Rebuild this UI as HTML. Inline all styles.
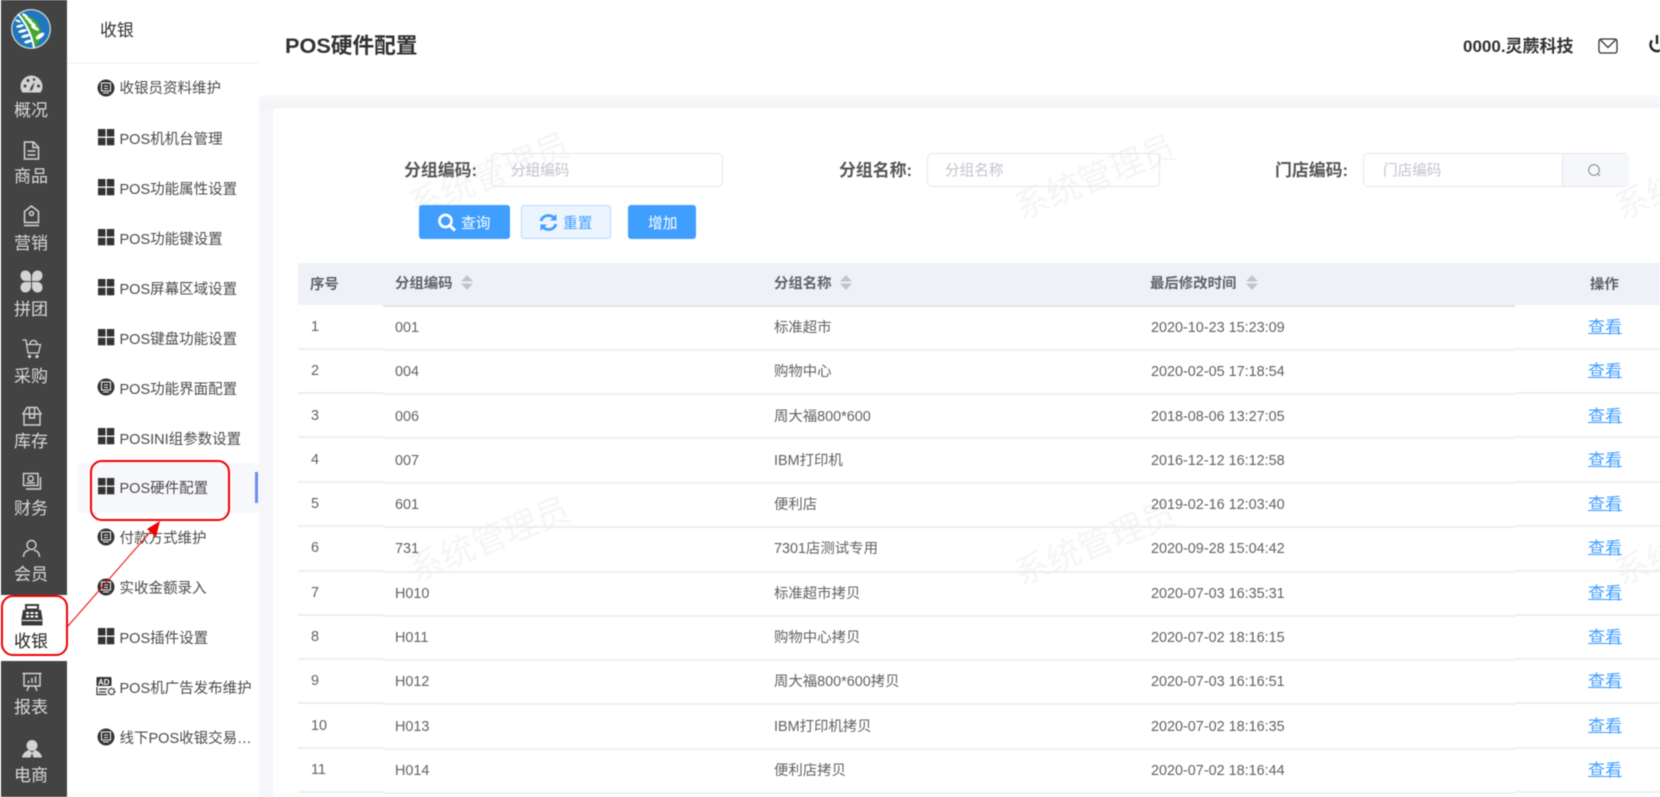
<!DOCTYPE html>
<html lang="zh-CN">
<head>
<meta charset="utf-8">
<title>POS硬件配置</title>
<style>
html,body{margin:0;padding:0;width:1660px;height:797px;overflow:hidden;background:#fff}
#w{position:relative;width:1660px;height:797px;overflow:hidden;background:#fff;font-family:"Liberation Sans","Noto Sans CJK SC",sans-serif;color:#606266;filter:blur(.4px)}
#w div,#w svg{position:absolute}
.t{white-space:nowrap;line-height:20px;height:20px;margin-top:1px}
.rail{left:1px;top:0;width:66px;height:595px;background:#434343}
.rail2{left:1px;top:661px;width:66px;height:136px;background:#434343}
.rl{left:0;width:62px;text-align:center;font-size:17px;color:#d9d9d9;white-space:nowrap;line-height:22px;height:22px;margin-top:1px}
.m{left:119.500px;font-size:14.5px;color:#4a4a4a}
.lb{font-size:16.9px;font-weight:bold;color:#555;margin-top:2px}
.inp{border:1px solid #e4e7ed;border-radius:5px;box-sizing:border-box;height:34px;top:153px}
.ph{top:159px;font-size:14.6px;color:#c0c4cc;margin-top:2px}
.bt{margin-top:2px}
.btn{top:205px;height:34px;border-radius:3px;background:#409eff;box-sizing:border-box}
.th{top:273px;font-size:14.4px;font-weight:bold;color:#606266}
.line{height:2px;background:#ebeef2}
.r{left:0;width:1660px;height:20px;margin-top:1px}
.r div{white-space:nowrap;line-height:20px;height:20px;top:0;font-size:14.4px;color:#606266}
.r div:nth-child(1){left:311px;top:-1px}
.r div:nth-child(2){left:395px}
.r div:nth-child(3){left:774px}
.r div:nth-child(4){left:1151px}
.r div:nth-child(5){left:1588px;font-size:17px;color:#409eff;text-decoration:underline;text-underline-offset:0;text-decoration-thickness:1px}
.wm{font-size:34px;color:#f5f5f6;white-space:nowrap;transform:rotate(-22deg);width:175px;height:40px;line-height:40px;text-align:center}
</style>
</head>
<body>
<div id="w">

<!-- content background -->
<div style="left:259px;top:95px;width:1401px;height:702px;background:#f5f6fa"></div>
<div style="left:259px;top:95px;width:1401px;height:13px;background:linear-gradient(#fafafb,#f2f3f5)"></div>
<div style="left:273px;top:108px;width:1387px;height:689px;background:#fff;border-radius:5px 0 0 0"></div>

<!-- watermarks -->
<div class="wm" style="left:402px;top:156px">系统管理员</div>
<div class="wm" style="left:1008px;top:158px">系统管理员</div>
<div class="wm" style="left:1608px;top:158px">系统管理员</div>
<div class="wm" style="left:402px;top:520px">系统管理员</div>
<div class="wm" style="left:1008px;top:524px">系统管理员</div>
<div class="wm" style="left:1608px;top:524px">系统管理员</div>

<!-- left rail -->
<div class="rail"></div>
<div class="rail2"></div>

<!-- logo -->
<svg style="left:10px;top:8px" width="42" height="42" viewBox="0 0 42 42">
<circle cx="21" cy="21" r="20" fill="#cfd5d0"/>
<circle cx="21" cy="21" r="18.700" fill="#1f78be"/>
<path d="M8 7.500A18.700 18.700 0 0 1 25 39.300C24 30 18 17 8 7.500Z" fill="#45a82c"/>
<path d="M8 6C15 14 22 27 24 40" stroke="#fff" stroke-width="2" fill="none"/>
<g fill="#fff">
<ellipse cx="15" cy="7.500" rx="3.500" ry="1.300" transform="rotate(35 15 7.500)"/>
<ellipse cx="18.500" cy="11.500" rx="4" ry="1.400" transform="rotate(35 18.500 11.500)"/>
<ellipse cx="22" cy="15.500" rx="4.500" ry="1.500" transform="rotate(35 22 15.500)"/>
<ellipse cx="25" cy="20" rx="4.500" ry="1.600" transform="rotate(30 25 20)"/>
<ellipse cx="30" cy="28" rx="5" ry="2.200" transform="rotate(-35 30 28)"/>
<ellipse cx="8" cy="13" rx="3" ry="1.100" transform="rotate(20 8 13)"/>
<ellipse cx="10" cy="18" rx="4" ry="1.400" transform="rotate(-15 10 18)"/>
<ellipse cx="12.500" cy="23" rx="4.500" ry="1.500" transform="rotate(-15 12.500 23)"/>
<ellipse cx="15.500" cy="28" rx="4.500" ry="1.600" transform="rotate(-15 15.500 28)"/>
<ellipse cx="18" cy="33.500" rx="4" ry="1.600" transform="rotate(-15 18 33.500)"/>
</g>
</svg>

<!-- rail icons -->
<svg style="left:20px;top:75px" width="23" height="18" viewBox="0 0 23 18"><path d="M11.500 0.500A11 11 0 0 0 .5 11.500C.5 14 1.300 16 2.500 17.500H20.500C21.700 16 22.500 14 22.500 11.500A11 11 0 0 0 11.500 .5Z" fill="#d4d4d4"/><path d="M14.500 7L10.500 12.500 10 16.500 12.800 14Z" fill="#434343"/><circle cx="5" cy="11" r="1.500" fill="#434343"/><circle cx="8" cy="5.500" r="1.500" fill="#434343"/><circle cx="14" cy="4.500" r="1.300" fill="#434343"/><circle cx="18.500" cy="11" r="1.500" fill="#434343"/></svg>
<svg style="left:23px;top:141px" width="17" height="19" viewBox="0 0 17 19" fill="none" stroke="#d4d4d4" stroke-width="1.500"><path d="M1.500 1H10.500L15.500 6V18H1.500Z"/><path d="M10 1V6.500H15.500M4.500 10H12.500M4.500 14H12.500"/></svg>
<svg style="left:23px;top:205px" width="17" height="22" viewBox="0 0 17 22" fill="none" stroke="#d4d4d4" stroke-width="1.500"><path d="M8.500 1L15.500 6.500V17.500H1.500V6.500Z"/><circle cx="8.500" cy="8.500" r="2"/><path d="M1 20.500H16"/></svg>
<svg style="left:20px;top:270px" width="23" height="23" viewBox="0 0 23 23" fill="#d4d4d4"><path d="M5.500 0.500C8.500 .5 11 3 11 6.500V11H5.500C2.500 11 .5 8.500 .5 5.500S2.500 .5 5.500 .5Z"/><path d="M17.500 .5C14.500 .5 12 3 12 6.500V11H17.500C20.500 11 22.500 8.500 22.500 5.500S20.500 .5 17.500 .5Z"/><path d="M5.500 22.500C8.500 22.500 11 20 11 16.500V12H5.500C2.500 12 .5 14.500 .5 17.500S2.500 22.500 5.500 22.500Z"/><path d="M17.500 22.500C14.500 22.500 12 20 12 16.500V12H17.500C20.500 12 22.500 14.500 22.500 17.500S20.500 22.500 17.500 22.500Z"/></svg>
<svg style="left:22px;top:339px" width="20" height="20" viewBox="0 0 20 20" fill="none" stroke="#d4d4d4" stroke-width="1.300"><path d="M0.500 1H4L6 14H16.500L18.500 5.500H5"/><path d="M8 5.500C8 2.500 9.500 1.500 11.500 1.500S15 2.500 15 5.500"/><circle cx="7.500" cy="17.500" r="1" fill="#d4d4d4"/><circle cx="15" cy="17.500" r="1" fill="#d4d4d4"/></svg>
<svg style="left:22px;top:406px" width="20" height="20" viewBox="0 0 20 20" fill="none" stroke="#d4d4d4" stroke-width="1.400"><path d="M2 8V19H18V8"/><path d="M1 8L5 1.500H15L19 8Z"/><path d="M7.500 1.500V12H12.500V1.500"/></svg>
<svg style="left:22px;top:472px" width="20" height="20" viewBox="0 0 20 20" fill="none" stroke="#d4d4d4" stroke-width="1.400"><rect x="1.500" y="1.500" width="14.500" height="12"/><circle cx="8.700" cy="6.500" r="2.600"/><path d="M4.500 11H13"/><path d="M18.500 5V17H4"/></svg>
<svg style="left:22px;top:539px" width="19" height="19" viewBox="0 0 19 19" fill="none" stroke="#d4d4d4" stroke-width="1.400"><circle cx="9.500" cy="6" r="4.500"/><path d="M1.500 18C1.500 14 4 11.500 7 11.300M17.500 18C17.500 14 15 11.500 12 11.300"/></svg>
<svg style="left:21px;top:603px" width="22" height="23" viewBox="0 0 22 23"><path d="M4 1H18V7H20L21.500 16V22.500H.5V16L2 7H4Z" fill="#3a3a3a"/><rect x="6" y="3" width="10" height="2.500" fill="#fff"/><g fill="#fff"><rect x="5" y="9" width="3" height="2"/><rect x="9.500" y="9" width="3" height="2"/><rect x="14" y="9" width="3" height="2"/><rect x="5" y="12.500" width="3" height="2"/><rect x="9.500" y="12.500" width="3" height="2"/><rect x="14" y="12.500" width="3" height="2"/></g><rect x="1" y="17" width="20" height="1" fill="#fff"/></svg>
<svg style="left:22px;top:672px" width="20" height="20" viewBox="0 0 20 20" fill="none" stroke="#d4d4d4" stroke-width="1.400"><path d="M.5 1.500H19.500M2 1.500V14H18V1.500"/><path d="M7 14L5 19M13 14L15 19"/><path d="M6.500 11V8.500M10 11V6M13.500 11V4.500"/></svg>
<svg style="left:22px;top:740px" width="20" height="18" viewBox="0 0 20 18" fill="#d4d4d4"><ellipse cx="10" cy="5.500" rx="5.500" ry="5.500"/><path d="M6.500 10C3 11.500 .5 14 0 17.500H8.500L10 13 11.500 17.500H20C19.500 14 17 11.500 13.500 10L10 12.500Z"/></svg>

<!-- rail labels -->
<div class="rl" style="top:99px">概况</div>
<div class="rl" style="top:165px">商品</div>
<div class="rl" style="top:232px">营销</div>
<div class="rl" style="top:298px">拼团</div>
<div class="rl" style="top:365px">采购</div>
<div class="rl" style="top:430px">库存</div>
<div class="rl" style="top:497px">财务</div>
<div class="rl" style="top:563px">会员</div>
<div class="rl" style="top:630px;color:#222">收银</div>
<div class="rl" style="top:696px">报表</div>
<div class="rl" style="top:764px">电商</div>

<!-- second column -->
<div class="t" style="left:100px;top:20px;font-size:16.9px;color:#303133">收银</div>
<div style="left:67px;top:63px;width:192px;height:1px;background:#eff0f2"></div>
<div style="left:77px;top:463px;width:182px;height:50px;background:#f7f8fb"></div>
<div style="left:255px;top:472px;width:3px;height:31px;background:#6a8ef0"></div>

<!-- menu icons -->
<svg width="0" height="0" style="left:0;top:0"><defs>
<g id="g"><rect x="0" y="0" width="7.500" height="7.500" fill="#333"/><rect x="8.800" y="0" width="7.500" height="7.500" fill="#333"/><rect x="0" y="8.800" width="7.500" height="7.500" fill="#333"/><rect x="8.800" y="8.800" width="7.500" height="7.500" fill="#333"/></g>
<g id="c"><circle cx="9" cy="9" r="8.500" fill="#333"/><rect x="4.500" y="4" width="9" height="8" fill="none" stroke="#eee" stroke-width="1.100"/><path d="M7 7H11M7 9.500H11" stroke="#eee" stroke-width=".9"/><path d="M6 14H12" stroke="#eee" stroke-width="1"/></g>
</defs></svg>
<svg style="left:97px;top:79px" width="18" height="18"><use href="#c"/></svg>
<svg style="left:98px;top:129px" width="17" height="17"><use href="#g"/></svg>
<svg style="left:98px;top:179px" width="17" height="17"><use href="#g"/></svg>
<svg style="left:98px;top:229px" width="17" height="17"><use href="#g"/></svg>
<svg style="left:98px;top:279px" width="17" height="17"><use href="#g"/></svg>
<svg style="left:98px;top:329px" width="17" height="17"><use href="#g"/></svg>
<svg style="left:97px;top:378px" width="18" height="18"><use href="#c"/></svg>
<svg style="left:98px;top:428px" width="17" height="17"><use href="#g"/></svg>
<svg style="left:98px;top:478px" width="17" height="17"><use href="#g"/></svg>
<svg style="left:97px;top:528px" width="18" height="18"><use href="#c"/></svg>
<svg style="left:97px;top:578px" width="18" height="18"><use href="#c"/></svg>
<svg style="left:98px;top:628px" width="17" height="17"><use href="#g"/></svg>
<svg style="left:96px;top:677px" width="20" height="19" viewBox="0 0 20 19"><rect x="0.500" y="0" width="15" height="9" rx="1" fill="#333"/><text x="2" y="7.800" font-family="Liberation Sans" font-size="8" font-weight="bold" fill="#fff">AD</text><path d="M1 10V17.500H11M3 12H11M3 15H10" stroke="#333" stroke-width="1.200" fill="none"/><circle cx="15.500" cy="14.500" r="3" fill="none" stroke="#333" stroke-width="1.800" stroke-dasharray="1.500 .7"/></svg>
<svg style="left:97px;top:728px" width="18" height="18"><use href="#c"/></svg>

<!-- menu labels -->
<div class="t m" style="top:78px">收银员资料维护</div>
<div class="t m" style="top:129px">POS机机台管理</div>
<div class="t m" style="top:179px">POS功能属性设置</div>
<div class="t m" style="top:229px">POS功能键设置</div>
<div class="t m" style="top:279px">POS屏幕区域设置</div>
<div class="t m" style="top:329px">POS键盘功能设置</div>
<div class="t m" style="top:379px">POS功能界面配置</div>
<div class="t m" style="top:429px">POSINI组参数设置</div>
<div class="t m" style="top:478px">POS硬件配置</div>
<div class="t m" style="top:528px">付款方式维护</div>
<div class="t m" style="top:578px">实收金额录入</div>
<div class="t m" style="top:628px">POS插件设置</div>
<div class="t m" style="top:678px">POS机广告发布维护</div>
<div class="t m" style="top:728px;width:134px;overflow:hidden;text-overflow:ellipsis">线下POS收银交易设置</div>

<!-- header -->
<div class="t" style="left:285px;top:35px;font-size:21.7px;font-weight:bold;color:#303133">POS硬件配置</div>
<div class="t" style="left:1463px;top:36px;font-size:17px;font-weight:bold;color:#303133">0000.灵蕨科技</div>
<svg style="left:1598px;top:38px" width="20" height="16" viewBox="0 0 20 16" fill="none" stroke="#333" stroke-width="1.300"><rect x="1" y="1" width="18" height="14" rx="2"/><path d="M2 1.500L10 9.500 18 1.500"/></svg>
<svg style="left:1647px;top:34px" width="13" height="19" viewBox="0 0 13 19" fill="none" stroke="#222" stroke-width="2.400"><path d="M5 6.500A6.500 6.500 0 1 0 15 6.500"/><path d="M10 1V10"/></svg>

<!-- filter -->
<div class="t lb" style="left:404px;top:159px">分组编码:</div>
<div class="inp" style="left:491px;width:232px"></div>
<div class="t ph" style="left:511px">分组编码</div>
<div class="t lb" style="left:839px;top:159px">分组名称:</div>
<div class="inp" style="left:927px;width:233px"></div>
<div class="t ph" style="left:945px">分组名称</div>
<div class="t lb" style="left:1275px;top:159px">门店编码:</div>
<div class="inp" style="left:1363px;width:266px"></div>
<div style="left:1562px;top:154px;width:66px;height:32px;background:#f5f7fa;border-left:1px solid #e4e7ed;border-radius:0 4px 4px 0"></div>
<div class="t ph" style="left:1383px">门店编码</div>
<svg style="left:1587px;top:163px" width="15" height="15" viewBox="0 0 15 15" fill="none" stroke="#8a8f99" stroke-width="1.100"><circle cx="7" cy="7" r="5.300"/><path d="M10.800 10.800L13 13"/></svg>

<div class="btn" style="left:419px;width:91px"></div>
<svg style="left:437px;top:213px" width="20" height="19" viewBox="0 0 20 19" fill="none" stroke="#fff"><circle cx="8.500" cy="8" r="6" stroke-width="2.700"/><path d="M12.800 12.500L18 17.500" stroke-width="3"/></svg>
<div class="t bt" style="left:461px;top:212px;font-size:14.7px;color:#fff">查询</div>
<div class="btn" style="left:521px;width:90px;background:#ecf5ff;border:1px solid #b3d8ff"></div>
<svg style="left:539px;top:213px" width="19" height="19" viewBox="0 0 19 19" fill="none" stroke="#409eff" stroke-width="2.800"><path d="M2 8C3 4.500 6 2.500 9.500 2.500C12 2.500 14 3.500 15.500 5.500"/><path d="M17 11C16 14.500 13 16.500 9.500 16.500C7 16.500 5 15.500 3.500 13.500"/><path d="M17.500 1V7.500H11Z" fill="#409eff" stroke="none"/><path d="M1.500 18V11.500H8Z" fill="#409eff" stroke="none"/></svg>
<div class="t bt" style="left:563px;top:212px;font-size:14.7px;color:#409eff">重置</div>
<div class="btn" style="left:628px;width:68px"></div>
<div class="t bt" style="left:648px;top:212px;font-size:14.7px;color:#fff">增加</div>

<!-- table header -->
<div style="left:298px;top:263px;width:1362px;height:42px;background:#eef1f6"></div>
<div class="line" style="left:383px;top:305px;width:1132px;background:#dfe3e9"></div>
<div class="t th" style="left:310px;top:274px">序号</div>
<div class="t th" style="left:395px">分组编码</div>
<div class="t th" style="left:774px">分组名称</div>
<div class="t th" style="left:1150px">最后修改时间</div>
<div class="t th" style="left:1590px;top:274px">操作</div>
<svg style="left:461px;top:275px" width="12" height="15" viewBox="0 0 12 15" fill="#c0c4cc"><path d="M6 0L12 6.500H0ZM6 15L0 8.500H12Z"/></svg>
<svg style="left:840px;top:275px" width="12" height="15" viewBox="0 0 12 15" fill="#c0c4cc"><path d="M6 0L12 6.500H0ZM6 15L0 8.500H12Z"/></svg>
<svg style="left:1246px;top:275px" width="12" height="15" viewBox="0 0 12 15" fill="#c0c4cc"><path d="M6 0L12 6.500H0ZM6 15L0 8.500H12Z"/></svg>

<!-- row lines -->
<div class="line" style="left:383px;top:349px;width:1132px"></div><div class="line" style="left:298px;top:348px;width:85px"></div><div class="line" style="left:1515px;top:348px;width:145px"></div>
<div class="line" style="left:383px;top:393px;width:1132px"></div><div class="line" style="left:298px;top:392px;width:85px"></div><div class="line" style="left:1515px;top:392px;width:145px"></div>
<div class="line" style="left:383px;top:437px;width:1132px"></div><div class="line" style="left:298px;top:436px;width:85px"></div><div class="line" style="left:1515px;top:436px;width:145px"></div>
<div class="line" style="left:383px;top:482px;width:1132px"></div><div class="line" style="left:298px;top:481px;width:85px"></div><div class="line" style="left:1515px;top:481px;width:145px"></div>
<div class="line" style="left:383px;top:526px;width:1132px"></div><div class="line" style="left:298px;top:525px;width:85px"></div><div class="line" style="left:1515px;top:525px;width:145px"></div>
<div class="line" style="left:383px;top:571px;width:1132px"></div><div class="line" style="left:298px;top:570px;width:85px"></div><div class="line" style="left:1515px;top:570px;width:145px"></div>
<div class="line" style="left:383px;top:615px;width:1132px"></div><div class="line" style="left:298px;top:614px;width:85px"></div><div class="line" style="left:1515px;top:614px;width:145px"></div>
<div class="line" style="left:383px;top:659px;width:1132px"></div><div class="line" style="left:298px;top:658px;width:85px"></div><div class="line" style="left:1515px;top:658px;width:145px"></div>
<div class="line" style="left:383px;top:703px;width:1132px"></div><div class="line" style="left:298px;top:702px;width:85px"></div><div class="line" style="left:1515px;top:702px;width:145px"></div>
<div class="line" style="left:383px;top:748px;width:1132px"></div><div class="line" style="left:298px;top:747px;width:85px"></div><div class="line" style="left:1515px;top:747px;width:145px"></div>
<div class="line" style="left:383px;top:792px;width:1132px"></div><div class="line" style="left:298px;top:791px;width:85px"></div><div class="line" style="left:1515px;top:791px;width:145px"></div>

<!-- rows -->
<div class="r" style="top:317px"><div>1</div><div>001</div><div>标准超市</div><div>2020-10-23 15:23:09</div><div>查看</div></div>
<div class="r" style="top:361px"><div>2</div><div>004</div><div>购物中心</div><div>2020-02-05 17:18:54</div><div>查看</div></div>
<div class="r" style="top:406px"><div>3</div><div>006</div><div>周大福800*600</div><div>2018-08-06 13:27:05</div><div>查看</div></div>
<div class="r" style="top:450px"><div>4</div><div>007</div><div>IBM打印机</div><div>2016-12-12 16:12:58</div><div>查看</div></div>
<div class="r" style="top:494px"><div>5</div><div>601</div><div>便利店</div><div>2019-02-16 12:03:40</div><div>查看</div></div>
<div class="r" style="top:538px"><div>6</div><div>731</div><div>7301店测试专用</div><div>2020-09-28 15:04:42</div><div>查看</div></div>
<div class="r" style="top:583px"><div>7</div><div>H010</div><div>标准超市拷贝</div><div>2020-07-03 16:35:31</div><div>查看</div></div>
<div class="r" style="top:627px"><div>8</div><div>H011</div><div>购物中心拷贝</div><div>2020-07-02 18:16:15</div><div>查看</div></div>
<div class="r" style="top:671px"><div>9</div><div>H012</div><div>周大福800*600拷贝</div><div>2020-07-03 16:16:51</div><div>查看</div></div>
<div class="r" style="top:716px"><div>10</div><div>H013</div><div>IBM打印机拷贝</div><div>2020-07-02 18:16:35</div><div>查看</div></div>
<div class="r" style="top:760px"><div>11</div><div>H014</div><div>便利店拷贝</div><div>2020-07-02 18:16:44</div><div>查看</div></div>

<!-- red annotations -->
<div style="left:90px;top:460px;width:140px;height:61px;border:2px solid #f00000;border-radius:12px;box-sizing:border-box"></div>
<div style="left:1px;top:595px;width:67px;height:61px;border:2px solid #f00000;border-radius:12px;box-sizing:border-box"></div>
<svg style="left:60px;top:510px" width="110" height="125" viewBox="60 510 110 125"><path d="M68 626L152 530" stroke="#f00000" stroke-width="1" fill="none"/><path d="M160 521L147 529 156 537Z" fill="#f00000"/></svg>

</div>
</body>
</html>
